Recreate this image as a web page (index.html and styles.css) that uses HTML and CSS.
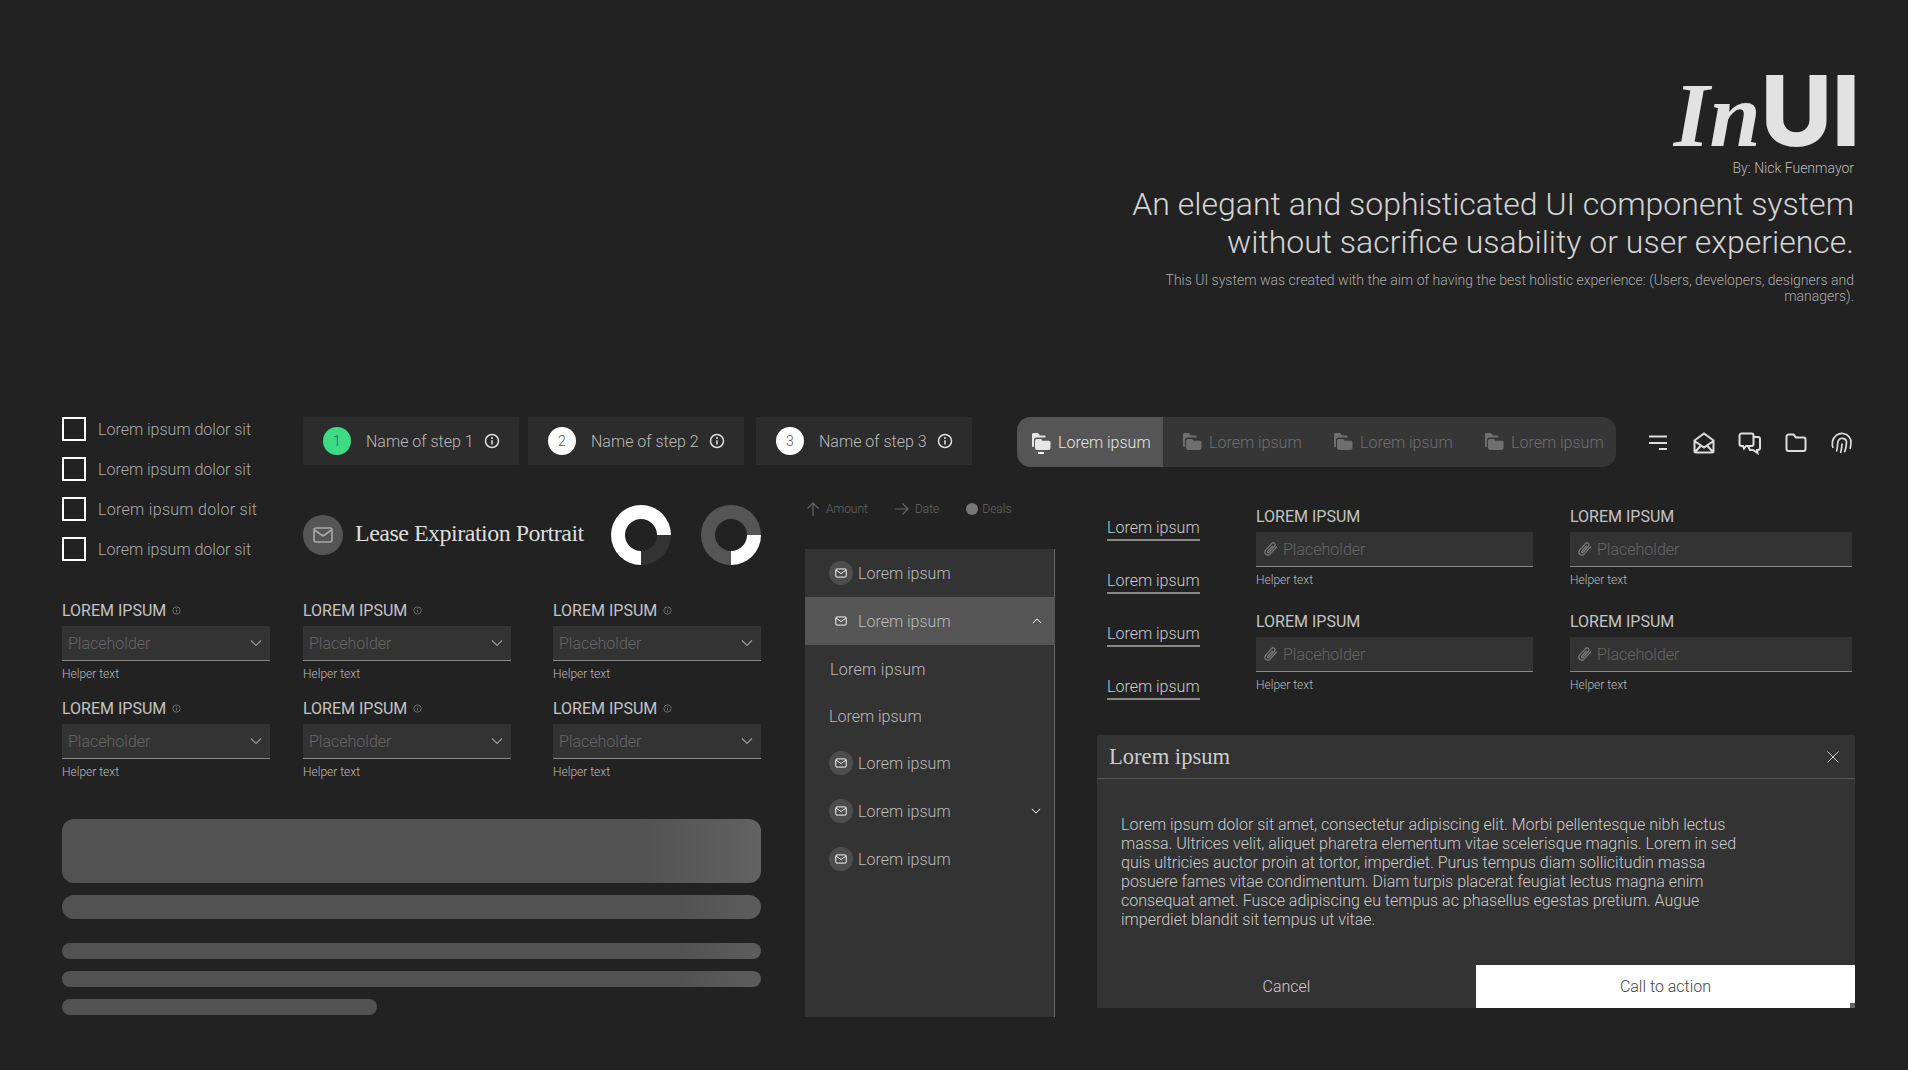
FILE: index.html
```html
<!DOCTYPE html>
<html lang="en">
  <head>
    <meta charset="UTF-8" />
    <title>InUI</title>
    <link rel="stylesheet" href="styles.css">
  </head>
  <body>
    <svg class="sprite" width="0" height="0">
      <symbol id="i-info" viewBox="0 0 16 16"><circle cx="8" cy="8" r="6.5" fill="none" stroke="currentColor" stroke-width="1.5"/><path d="M8 7.2v4.2" stroke="currentColor" stroke-width="1.6"/><circle cx="8" cy="4.9" r="1" fill="currentColor"/></symbol>
      <symbol id="i-mail" viewBox="0 0 24 24"><rect x="3" y="5" width="18" height="14" rx="2" fill="none" stroke="currentColor" stroke-width="1.6"/><path d="M3.5 7l8.5 6 8.5-6" fill="none" stroke="currentColor" stroke-width="1.6"/></symbol>
      <symbol id="i-down" viewBox="0 0 12 12"><path d="M1 3.5l5 5 5-5" fill="none" stroke="currentColor" stroke-width="1.2"/></symbol>
      <symbol id="i-clip" viewBox="0 0 16 16"><path d="M14 5.500l-7.200 7.900a3 3 0 0 1-4.400-4l6.300-7a2 2 0 0 1 3 2.600l-5.800 6.500a.9.900 0 0 1-1.300-1.200l5-5.600" fill="none" stroke="currentColor" stroke-width="1.300"/></symbol>
      <symbol id="i-folders" viewBox="0 0 20 20"><path d="M1 2.500A1.500 1.500 0 0 1 2.500 1H7l2 2.500h4.500a1 1 0 0 1 1 1V5.500H5.500A2.500 2.500 0 0 0 3 8v7H2.500A1.500 1.500 0 0 1 1 13.500z" fill="currentColor"/><path d="M6 7h4l1.500 1.700H18a1.500 1.500 0 0 1 1.500 1.500V15.500A2.500 2.500 0 0 1 17 18H6.500A2.500 2.500 0 0 1 4 15.500V9a2 2 0 0 1 2-2z" fill="currentColor"/></symbol>
    </svg>

    <header class="intro">
      <div class="logo"><em>In</em><strong>UI</strong></div>
      <p class="byline">By: Nick Fuenmayor</p>
      <h1>An elegant and sophisticated UI component system<br />without sacrifice usability or user experience.</h1>
      <p class="lead">This UI system was created with the aim of having the best holistic experience: (Users, developers, designers and managers).</p>
    </header>

    <main class="board">
      <div class="checks">
        <label class="check"><span class="box"></span>Lorem ipsum dolor sit</label>
        <label class="check"><span class="box"></span>Lorem ipsum dolor sit</label>
        <label class="check wide"><span class="box"></span>Lorem ipsum dolor sit</label>
        <label class="check"><span class="box"></span>Lorem ipsum dolor sit</label>
      </div>

      <div class="topbar">
        <div class="steps">
          <div class="step"><span class="num done">1</span>Name of step 1<svg class="info"><use href="#i-info"/></svg></div>
          <div class="step"><span class="num">2</span>Name of step 2<svg class="info"><use href="#i-info"/></svg></div>
          <div class="step"><span class="num">3</span>Name of step 3<svg class="info"><use href="#i-info"/></svg></div>
        </div>
        <nav class="tabs">
          <a class="tab active"><svg><use href="#i-folders"/></svg>Lorem ipsum</a>
          <a class="tab"><svg><use href="#i-folders"/></svg>Lorem ipsum</a>
          <a class="tab"><svg><use href="#i-folders"/></svg>Lorem ipsum</a>
          <a class="tab"><svg><use href="#i-folders"/></svg>Lorem ipsum</a>
        </nav>
        <div class="actions">
          <svg viewBox="0 0 24 24"><path d="M3 5.500h18M3 12h18M13 18h8"/></svg>
          <svg viewBox="0 0 24 24"><path d="M2.500 9.500L12 2.500l9.500 7V20a1.500 1.500 0 0 1-1.500 1.500H4A1.500 1.500 0 0 1 2.500 20zM2.500 10l9.500 6.500 9.500-6.500M3 21l6.500-7M21 21l-6.500-7"/></svg>
          <svg viewBox="0 0 24 24"><path d="M3.500 2.500h10a2 2 0 0 1 2 2V13a2 2 0 0 1-2 2H9l-1 0-2 2.500-1-2.500H3.500a2 2 0 0 1-2-2V4.500a2 2 0 0 1 2-2zM15.500 6h4.500a2 2 0 0 1 2 2v9a2 2 0 0 1-2 2h-1l.5 3-4.500-3h-3l-2-4"/></svg>
          <svg viewBox="0 0 24 24"><path d="M2.500 5.500a2 2 0 0 1 2-2h5l2.500 3h7.500a2 2 0 0 1 2 2V18a2 2 0 0 1-2 2h-15a2 2 0 0 1-2-2z"/></svg>
          <svg class="thin" viewBox="0 0 24 24"><path d="M3 17c-.8-2-1-4-.5-6.500C3.500 5.500 8 2 13 2.500c5 .5 8.500 5 8 10-.2 2-.5 4-1 5.500M6.500 20.500c1-3 1-5.500 1.200-8.500.3-3 2.500-5 5-4.700 2.700.3 4 2.500 3.800 5-.2 3-.8 6-2 9M10.500 22c1-3 1.300-6 1.600-9.500"/></svg>
        </div>
      </div>

      <div class="summary">
        <span class="avatar"><svg><use href="#i-mail"/></svg></span>
        <h2>Lease Expiration Portrait</h2>
        <span class="donut one"></span>
        <span class="donut two"></span>
      </div>

      <section class="left">
        <div class="selects">
          <div class="field"><div class="label">LOREM IPSUM<svg class="tip"><use href="#i-info"/></svg></div><div class="select">Placeholder<svg><use href="#i-down"/></svg></div><div class="helper">Helper text</div></div>
          <div class="field"><div class="label">LOREM IPSUM<svg class="tip"><use href="#i-info"/></svg></div><div class="select">Placeholder<svg><use href="#i-down"/></svg></div><div class="helper">Helper text</div></div>
          <div class="field"><div class="label">LOREM IPSUM<svg class="tip"><use href="#i-info"/></svg></div><div class="select">Placeholder<svg><use href="#i-down"/></svg></div><div class="helper">Helper text</div></div>
          <div class="field"><div class="label">LOREM IPSUM<svg class="tip"><use href="#i-info"/></svg></div><div class="select">Placeholder<svg><use href="#i-down"/></svg></div><div class="helper">Helper text</div></div>
          <div class="field"><div class="label">LOREM IPSUM<svg class="tip"><use href="#i-info"/></svg></div><div class="select">Placeholder<svg><use href="#i-down"/></svg></div><div class="helper">Helper text</div></div>
          <div class="field"><div class="label">LOREM IPSUM<svg class="tip"><use href="#i-info"/></svg></div><div class="select">Placeholder<svg><use href="#i-down"/></svg></div><div class="helper">Helper text</div></div>
        </div>
        <div class="skeleton">
          <div class="bone hero"></div>
          <div class="bone mid"></div>
          <div class="bone line first"></div>
          <div class="bone line"></div>
          <div class="bone line short"></div>
        </div>
      </section>

      <section class="middle">
        <div class="legend">
          <span><svg viewBox="0 0 14 14"><path d="M7 14V1M1.500 6.500L7 1l5.500 5.500"/></svg>Amount</span>
          <span><svg viewBox="0 0 14 14"><path d="M0 7h13M7.500 1.500L13 7l-5.500 5.500"/></svg>Date</span>
          <span><i class="dot"></i>Deals</span>
        </div>
        <div class="menu">
          <a class="row"><span class="badge"><svg><use href="#i-mail"/></svg></span>Lorem ipsum</a>
          <a class="row active"><span class="badge"><svg><use href="#i-mail"/></svg></span>Lorem ipsum<svg class="chev up"><use href="#i-down"/></svg></a>
          <a class="row sub first">Lorem ipsum</a>
          <a class="row sub tight">Lorem ipsum</a>
          <a class="row"><span class="badge"><svg><use href="#i-mail"/></svg></span>Lorem ipsum</a>
          <a class="row"><span class="badge"><svg><use href="#i-mail"/></svg></span>Lorem ipsum<svg class="chev"><use href="#i-down"/></svg></a>
          <a class="row"><span class="badge"><svg><use href="#i-mail"/></svg></span>Lorem ipsum</a>
        </div>
      </section>

      <section class="right">
        <div class="forms">
          <div class="links">
            <a>Lorem ipsum</a>
            <a>Lorem ipsum</a>
            <a>Lorem ipsum</a>
            <a>Lorem ipsum</a>
          </div>
          <div class="inputs">
            <div class="field"><div class="label">LOREM IPSUM</div><div class="input"><svg><use href="#i-clip"/></svg>Placeholder</div><div class="helper">Helper text</div></div>
            <div class="field"><div class="label">LOREM IPSUM</div><div class="input"><svg><use href="#i-clip"/></svg>Placeholder</div><div class="helper">Helper text</div></div>
            <div class="field"><div class="label">LOREM IPSUM</div><div class="input"><svg><use href="#i-clip"/></svg>Placeholder</div><div class="helper">Helper text</div></div>
            <div class="field"><div class="label">LOREM IPSUM</div><div class="input"><svg><use href="#i-clip"/></svg>Placeholder</div><div class="helper">Helper text</div></div>
          </div>
        </div>
        <div class="modal">
          <div class="modal-head">
            <h3>Lorem ipsum</h3>
            <svg viewBox="0 0 12 12"><path d="M.5.5l11 11M11.500.5l-11 11"/></svg>
          </div>
          <p class="modal-body">Lorem ipsum dolor sit amet, consectetur adipiscing elit. Morbi pellentesque nibh lectus massa. Ultrices velit, aliquet pharetra elementum vitae scelerisque magnis. Lorem in sed quis ultricies auctor proin at tortor, imperdiet. Purus tempus diam sollicitudin massa posuere fames vitae condimentum. Diam turpis placerat feugiat lectus magna enim consequat amet. Fusce adipiscing eu tempus ac phasellus egestas pretium. Augue imperdiet blandit sit tempus ut vitae.</p>
          <div class="modal-foot">
            <button class="btn">Cancel</button>
            <button class="btn primary">Call to action</button>
          </div>
        </div>
      </section>
    </main>
  </body>
</html>
```

FILE: styles.css
```css
* {
  box-sizing: border-box;
}

body {
  margin: 0;
  height: 1070px;
  overflow: hidden;
  background-color: #222;
  color: #ccc;
  font-family: Roboto, "Liberation Sans", sans-serif;
  font-weight: 300;
  font-size: 16px;
}

.sprite {
  display: block;
}

/* header */
.intro {
  height: 417px;
  padding: 61px 54px 0 0;
  text-align: right;
}

.logo {
  height: 100px;
  margin-right: -6px;
  line-height: 100px;
  color: #e2e2e2;
}

.logo em {
  font-family: "Liberation Serif", serif;
  font-weight: 700;
  font-size: 92px;
}

.logo strong {
  font-family: Inter, Roboto, sans-serif;
  font-size: 98px;
  font-weight: 800;
}

.byline {
  margin: -3px 0 0;
  font-size: 14px;
  line-height: 20px;
  color: #bbb;
}

h1 {
  margin: 7px 0 0;
  font-size: 32px;
  font-weight: 300;
  line-height: 38px;
  color: #d4d4d4;
}

.lead {
  width: 700px;
  margin: 11px 0 0 auto;
  font-size: 14px;
  line-height: 16px;
  color: #aaa;
}

/* board */
.board {
  display: grid;
  grid-template-columns: 241px 502px 292px 758px;
  grid-template-rows: 50px 98px auto;
  padding-left: 62px;
}

.checks {
  grid-column: 1;
  grid-row: 1 / 3;
  display: flex;
  flex-direction: column;
  gap: 16px;
}

.check {
  display: flex;
  align-items: center;
  gap: 12px;
  height: 24px;
  color: #aaa;
}

.check.wide {
  letter-spacing: 0.3px;
}

.box {
  width: 24px;
  height: 24px;
  border: 2px solid #fff;
}

.topbar {
  grid-column: 2 / 5;
  grid-row: 1;
  display: flex;
  align-items: flex-start;
}

.steps {
  display: flex;
  gap: 9px;
}

.step {
  display: flex;
  align-items: center;
  width: 216px;
  height: 48px;
  padding-left: 20px;
  background-color: #2c2c2c;
  color: #bbb;
}

.step + .step + .step {
  margin-left: 3px;
}

.num {
  width: 28px;
  height: 28px;
  margin-right: 15px;
  border-radius: 50%;
  background-color: #fff;
  color: #555;
  font-size: 14px;
  line-height: 28px;
  text-align: center;
}

.num.done {
  background-color: #3ddc84;
}

.info {
  width: 16px;
  height: 16px;
  margin-left: 10px;
  color: #ddd;
}

.tabs {
  display: flex;
  width: 599px;
  height: 50px;
  margin-left: 45px;
  border-radius: 14px;
  overflow: hidden;
  background-color: #363636;
}

.tab {
  position: relative;
  display: flex;
  align-items: center;
  gap: 7px;
  width: 151px;
  padding-left: 19px;
  color: #6f6f6f;
}

.tab svg {
  width: 20px;
  height: 20px;
}

.tab.active {
  width: 146px;
  padding-left: 14px;
  background-color: #555;
  color: #e6e6e6;
}

.tab.active::after {
  content: "";
  position: absolute;
  left: 21px;
  bottom: 13px;
  width: 6px;
  height: 2px;
  background-color: #fff;
}

.actions {
  display: flex;
  gap: 22px;
  margin: 14px 0 0 30px;
}

.actions svg {
  width: 24px;
  height: 24px;
  fill: none;
  stroke: #ddd;
  stroke-width: 2;
}

.actions .thin {
  stroke-width: 1.7;
}

.summary {
  grid-column: 2;
  grid-row: 2;
  display: flex;
  align-items: center;
  width: 458px;
  height: 60px;
  margin-top: 38px;
}

.avatar {
  display: flex;
  align-items: center;
  justify-content: center;
  width: 40px;
  height: 40px;
  margin-right: 12px;
  border-radius: 50%;
  background-color: #555;
  color: #aaa;
}

.avatar svg {
  width: 24px;
  height: 24px;
}

h2 {
  margin: 0 auto 3px 0;
  font-family: "Liberation Serif", serif;
  font-size: 24px;
  font-weight: 400;
  letter-spacing: -0.5px;
  color: #ddd;
}

.donut {
  position: relative;
  width: 60px;
  height: 60px;
  border-radius: 50%;
}

.donut::after {
  content: "";
  position: absolute;
  inset: 14px;
  border-radius: 50%;
  background-color: #222;
}

.donut.one {
  margin-right: 30px;
  background: conic-gradient(#fff 0 90deg, #333 90deg 180deg, #fff 180deg 360deg);
}

.donut.two {
  background: conic-gradient(#555 0 90deg, #fff 90deg 180deg, #555 180deg 360deg);
}

/* selects and skeleton */
.left {
  grid-column: 1 / 3;
  grid-row: 3;
  width: 699px;
  padding-top: 35px;
}

.selects {
  display: grid;
  grid-template-columns: 241px 250px 208px;
  row-gap: 16px;
}

.label {
  display: flex;
  align-items: center;
  height: 20px;
  font-weight: 400;
  color: #c4c4c4;
}

.tip {
  width: 9px;
  height: 9px;
  margin-left: 6px;
  color: #777;
}

.select,
.input {
  display: flex;
  align-items: center;
  height: 35px;
  background-color: #333;
  border-bottom: 1px solid #888;
  color: #666;
}

.select {
  justify-content: space-between;
  width: 208px;
  margin-top: 6px;
  padding: 0 8px 0 6px;
}

.select svg {
  width: 12px;
  height: 12px;
  color: #999;
}

.helper {
  height: 16px;
  margin-top: 5px;
  font-size: 12px;
  line-height: 16px;
  color: #bbb;
}

.skeleton {
  display: flex;
  flex-direction: column;
  gap: 12px;
  margin-top: 39px;
}

.bone {
  height: 16px;
  border-radius: 8px;
  background: linear-gradient(90deg, #525252 88%, #5c5c5c);
}

.bone.hero {
  height: 64px;
  border-radius: 12px;
  background: linear-gradient(90deg, #525252 83%, #626262);
}

.bone.mid {
  height: 24px;
  border-radius: 12px;
}

.bone.first {
  margin-top: 12px;
}

.bone.short {
  width: 315px;
  background: #525252;
}

/* legend and side menu */
.middle {
  grid-column: 3;
  grid-row: 2 / 4;
  padding-top: 34px;
}

.legend {
  display: flex;
  align-items: center;
  gap: 27px;
  height: 16px;
  margin-left: 1px;
  font-size: 12px;
  color: #666;
}

.legend span {
  display: flex;
  align-items: center;
  gap: 6px;
}

.legend svg {
  width: 14px;
  height: 14px;
  fill: none;
  stroke: #666;
  stroke-width: 1.2;
}

.dot {
  width: 12px;
  height: 12px;
  margin-right: -2px;
  border-radius: 50%;
  background-color: #777;
}

.menu {
  width: 250px;
  height: 468px;
  margin-top: 32px;
  background-color: #333;
  border-right: 1px solid #666;
}

.row {
  display: flex;
  align-items: center;
  height: 48px;
  padding: 0 13px 0 24px;
  color: #bbb;
}

.row.first {
  padding-left: 25px;
  letter-spacing: 0.3px;
}

.row.tight {
  height: 46px;
}

.row.active {
  width: 250px;
  background-color: #555;
}

.badge {
  display: flex;
  align-items: center;
  justify-content: center;
  width: 24px;
  height: 24px;
  margin-right: 5px;
  border-radius: 50%;
  background-color: #4d4d4d;
  color: #fff;
}

.row.active .badge {
  background: none;
}

.badge svg {
  width: 14px;
  height: 14px;
}

.chev {
  width: 10px;
  height: 10px;
  margin-left: auto;
  color: #fff;
}

.chev.up {
  transform: rotate(180deg);
}

/* links, inputs */
.right {
  grid-column: 4;
  grid-row: 2 / 4;
  padding-top: 39px;
}

.forms {
  display: flex;
  height: 195px;
}

.links {
  display: flex;
  flex-direction: column;
  gap: 29px;
  width: 159px;
  padding: 11px 0 0 10px;
}

.links a {
  width: 93px;
  height: 24px;
  line-height: 22px;
  white-space: nowrap;
  border-bottom: 2px solid #888;
  color: #ccc;
}

.inputs {
  display: grid;
  grid-template-columns: 277px 282px;
  column-gap: 37px;
  row-gap: 23px;
  align-content: start;
}

.input {
  margin-top: 6px;
  padding-left: 7px;
  gap: 4px;
}

.input svg {
  width: 16px;
  height: 16px;
  color: #777;
}

.modal {
  position: relative;
  display: flex;
  flex-direction: column;
  height: 273px;
  margin-top: 34px;
  background-color: #333;
}

.modal-head {
  display: flex;
  align-items: center;
  justify-content: space-between;
  height: 44px;
  padding: 0 16px 0 12px;
  border-bottom: 1px solid #555;
}

.modal-head svg {
  width: 12px;
  height: 12px;
  fill: none;
  stroke: #ccc;
}

h3 {
  margin: 1px 0 0;
  font-family: "Liberation Serif", serif;
  font-size: 22.6px;
  font-weight: 400;
  color: #ccc;
}

.modal-body {
  width: 640px;
  margin: 36px 0 0 24px;
  line-height: 19px;
  color: #ccc;
}

.modal-foot {
  display: flex;
  margin-top: auto;
}

.btn {
  width: 379px;
  height: 43px;
  border: none;
  background: none;
  color: #ccc;
  font: inherit;
}

.btn.primary {
  background-color: #fff;
  color: #444;
}

.modal::after {
  content: "";
  position: absolute;
  right: 0;
  bottom: 0;
  width: 5px;
  height: 5px;
  background-color: #666;
}
```
